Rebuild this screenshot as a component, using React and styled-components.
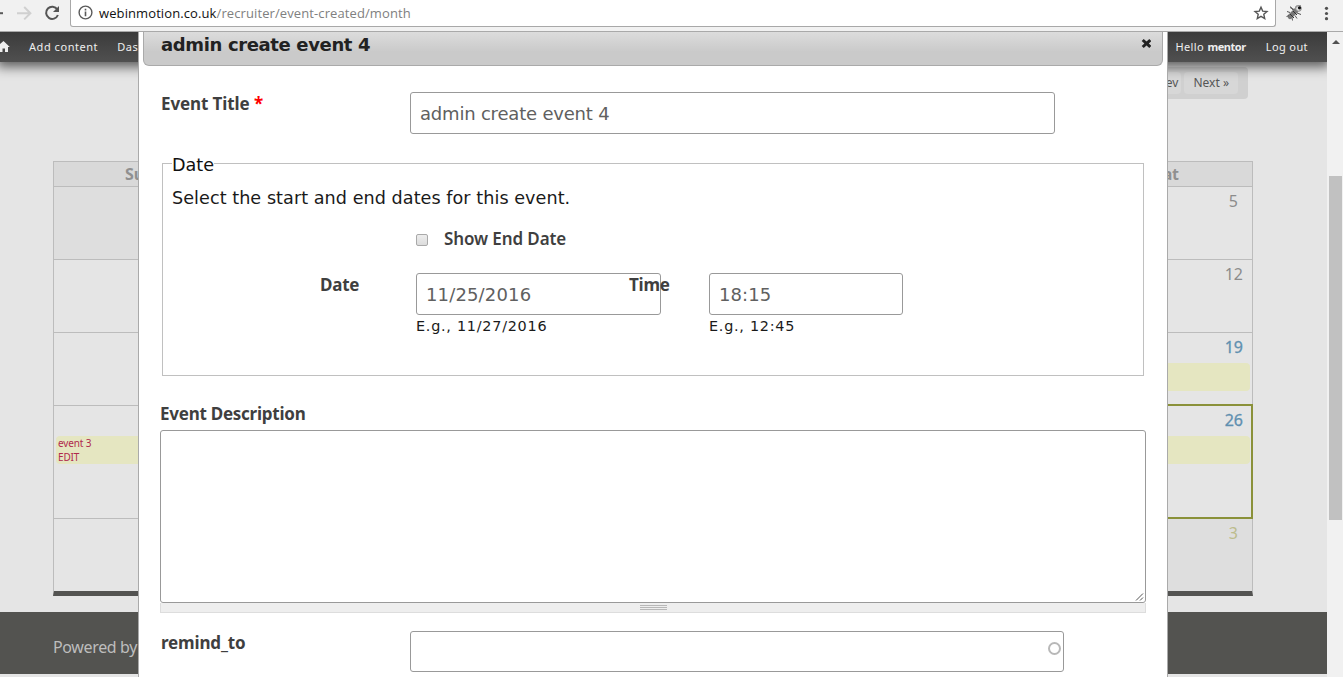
import React from 'react';
import styled, { createGlobalStyle, css } from 'styled-components';

const ui = '"Noto Sans", "Open Sans", sans-serif';
const body = '"DejaVu Sans", sans-serif';

const GlobalStyle = createGlobalStyle`
  * { box-sizing: border-box; }
  html, body { margin: 0; padding: 0; overflow: hidden; }
  body { font-family: ${body}; color: #1a1a1a; background: #fff; }
`;

const Browser = styled.div`
  width: 1343px;
  height: 677px;
  display: flex;
  flex-direction: column;
  overflow: hidden;
`;

const Toolbar = styled.header`
  height: 32px;
  flex: none;
  display: flex;
  align-items: flex-start;
  background: #f1f1f1;
  border-bottom: 1px solid #a9a9a9;
`;

const NavIcons = styled.div`
  width: 70px;
  height: 27px;
  flex: none;
  svg { display: block; }
`;

const AddressBar = styled.div`
  width: 1206px;
  height: 27px;
  padding: 0 6px 1px 7px;
  display: flex;
  align-items: center;
  background: #fff;
  border: 1px solid #a8a8a8;
  border-top: 0;
  border-radius: 0 0 3px 3px;
`;

const Url = styled.span`
  flex: 1;
  margin-left: 6px;
  font: 13px/18px "Open Sans", sans-serif;
  letter-spacing: 0.1px;
  color: #808080;
  b { font-weight: 400; color: #111; }
`;

const Extensions = styled.div`
  flex: 1;
  height: 27px;
  svg { display: block; }
`;

const Viewport = styled.div`
  flex: 1;
  min-height: 0;
  display: flex;
`;

const Page = styled.div`
  position: relative;
  width: 1327px;
  height: 645px;
  overflow: hidden;
  background: #e5e5e5;
  display: flex;
  flex-direction: column;
`;

const AdminBar = styled.nav`
  position: relative;
  height: 30px;
  flex: none;
  display: flex;
  align-items: center;
  padding: 0 19px 0 0;
  background: linear-gradient(#3b3b3b, #505050);
  box-shadow: 0 2px 12px 3px rgba(0, 0, 0, 0.6);
  font: 11px/16px ${ui};
  color: #eee;
  svg { display: block; margin-right: 19px; }
`;

const AdminLink = styled.span`
  margin-right: ${(p) => p.$gap || 0}px;
  letter-spacing: ${(p) => p.$spacing || 0.55}px;
`;

const Greeting = styled.span`
  margin-left: auto;
  margin-right: 20px;
  letter-spacing: 0.4px;
  white-space: pre;
  b { letter-spacing: -0.45px; }
`;

const PagerRow = styled.div`
  height: 99px;
  flex: none;
  padding: 5px 79px 0 0;
  display: flex;
  align-items: flex-start;
  justify-content: flex-end;
`;

const Pager = styled.div`
  height: 32px;
  padding: 5px 10px 0 6px;
  display: flex;
  gap: 3px;
  border-radius: 4px;
  background: #d0d0d0;
`;

const PagerLink = styled.span`
  height: 22px;
  padding: 0 9px;
  border-radius: 4px;
  background: #d7d7d7;
  font: 12px/22px ${ui};
  color: #555;
  &:first-child { padding-right: 3px; }
`;

const Calendar = styled.section`
  width: 1200px;
  flex: none;
  margin-left: 53px;
  border: 1px solid #bcbcbc;
  border-bottom: 5px solid #535351;
`;

const Week = styled.div`
  display: grid;
  grid-template-columns: repeat(7, 1fr);
  height: ${(p) => p.$height}px;
  border-top: 1px solid #bcbcbc;
`;

const Weekdays = styled(Week)`
  border-top: 0;
  background: #d9d9d9;
`;

const Weekday = styled.div`
  font: 700 16px/25px ${ui};
  color: #909090;
  text-align: center;
  letter-spacing: -0.2px;
`;

const tones = { past: '#8c8c8c', link: '#5f90b0', next: '#bcbc8c' };

const Day = styled.div`
  padding: 5px 2px 0;
  background: ${(p) => (p.$shade ? '#dedede' : 'transparent')};
  ${(p) =>
    p.$today &&
    css`
      margin: -2px -1px -1px 0;
      padding: 5px 1px 0;
      border: 2px solid #8a9139;
      z-index: 1;
    `}
`;

const DayNumber = styled.div`
  height: 25px;
  padding-right: ${(p) => p.$right || 7}px;
  font: 16px/19px ${ui};
  text-align: right;
  color: ${(p) => tones[p.$tone]};
  -webkit-text-stroke: ${(p) => (p.$tone === 'link' ? '0.3px' : '0')};
`;

const Event = styled.div`
  height: 28px;
  padding: 0 2px;
  border-radius: 4px;
  background: #e5e6c1;
  font: 10px/14px ${ui};
  letter-spacing: -0.15px;
  color: #b0294c;
`;

const Footer = styled.footer`
  height: 62px;
  flex: none;
  margin-top: 16px;
  padding: 25px 0 0 53px;
  background: #535350;
  font: 16px/20px ${ui};
  letter-spacing: -0.36px;
  color: #bdbdbd;
`;

const Dialog = styled.section`
  position: absolute;
  top: 0;
  left: 138px;
  width: 1030px;
  height: 645px;
  z-index: 5;
  overflow: hidden;
  background: #fff;
  border: solid #aaa;
  border-width: 0 1px;
`;

const TitleBar = styled.div`
  height: 34px;
  margin: 0 4px;
  padding: 3px 11px 0 17px;
  display: flex;
  justify-content: space-between;
  align-items: flex-start;
  border: 1px solid #aaa;
  border-top: 0;
  border-radius: 0 0 6px 6px;
  background: linear-gradient(#dcdcdc, #cacaca 60%);
`;

const Title = styled.h1`
  margin: 0;
  font: 700 18px/20px ${body};
  letter-spacing: -0.36px;
  color: #222;
`;

const Form = styled.form`
  padding: 26px 21px 0;
`;

const FormRow = styled.div`
  display: flex;
  align-items: flex-start;
  padding-left: 1px;
`;

const Label = styled.label`
  display: block;
  width: ${(p) => (p.$width ? p.$width + 'px' : 'auto')};
  font: 700 17px/24px ${ui};
  letter-spacing: ${(p) => p.$spacing || -0.25}px;
  color: #3f3f3f;
  em { color: #f00; font-style: normal; }
`;

const TextInput = styled.input`
  display: block;
  width: ${(p) => p.$width}px;
  height: 42px;
  margin: 0;
  padding: 0 9px;
  border: 1px solid #999;
  border-radius: 3px;
  outline: 0;
  background: #fff;
  font: 18px ${body};
  letter-spacing: ${(p) => p.$spacing || 0}px;
  color: #606060;
`;

const Fieldset = styled.fieldset`
  height: 224px;
  margin: 18px 2px 0;
  padding: 0 9px;
  border: 1px solid #c0c0c0;
`;

const Legend = styled.legend`
  padding: 4px 0 0;
  font: 17.6px/18px ${body};
  color: #111;
`;

const Hint = styled.p`
  margin: 13px 0 0;
  font: 17.6px/22px ${body};
  letter-spacing: 0.05px;
`;

const CheckRow = styled.div`
  display: flex;
  align-items: center;
  margin: 18px 0 0 244px;
  height: 24px;
  gap: 16px;
`;

const Checkbox = styled.span`
  width: 12px;
  height: 12px;
  margin-top: 2px;
  border: 1px solid #a9a9a9;
  border-radius: 2px;
  background: linear-gradient(#ededed, #dcdcdc);
`;

const CheckLabel = styled(Label)`
  font-weight: 600;
  letter-spacing: -0.1px;
`;

const DateRow = styled.div`
  display: flex;
  align-items: flex-start;
  margin: 22px 0 0 148px;
`;

const TimeLabel = styled(Label)`
  position: relative;
  z-index: 1;
  width: 80px;
  margin-left: -32px;
`;

const Example = styled.div`
  font: 14.4px/22px ${body};
  letter-spacing: 0.74px;
`;

const DescriptionLabel = styled(Label)`
  margin-top: 26px;
`;

const TextArea = styled.div`
  height: 173px;
  margin-top: 4px;
  display: flex;
  align-items: flex-end;
  justify-content: flex-end;
  border: 1px solid #999;
  border-radius: 3px;
`;

const Grippie = styled.div`
  height: 10px;
  display: flex;
  align-items: center;
  justify-content: center;
  border: 1px solid #ddd;
  border-top: 0;
  background: #eee;
  svg { display: block; }
`;

const ReminderRow = styled(FormRow)`
  margin-top: 18px;
`;

const Autocomplete = styled.div`
  display: flex;
  align-items: center;
  justify-content: flex-end;
  width: 654px;
  height: 41px;
  padding: 0 2px 6px 0;
  border: 1px solid #999;
  border-radius: 3px;
`;

const Throbber = styled.span`
  width: 13px;
  height: 13px;
  border: 2px solid #b8b8b8;
  border-radius: 50%;
`;

const Scrollbar = styled.aside`
  width: 16px;
  padding: 8px 1px 0 2px;
  display: flex;
  flex-direction: column;
  background: #f1f1f1;
  svg { display: block; margin-left: 3px; }
`;

const Thumb = styled.div`
  height: 344px;
  margin-top: 132px;
  background: #c1c1c1;
`;

const weeks = [
  { height: 73, days: [{ shade: true }, {}, {}, {}, {}, {}, { n: 5, tone: 'past', right: 12 }] },
  { height: 73, days: [{}, {}, {}, {}, {}, {}, { n: 12, tone: 'past' }] },
  { height: 73, days: [{}, {}, {}, {}, {}, {}, { n: 19, tone: 'link', event: [] }] },
  { height: 113, days: [{ event: ['event 3', 'EDIT'] }, {}, {}, {}, {}, {}, { n: 26, tone: 'link', event: [], today: true }] },
  { height: 73, days: [{}, {}, {}, {}, {}, {}, { n: 3, tone: 'next', right: 12, shade: true }] },
];

function BrowserToolbar() {
  return (
    <Toolbar>
      <NavIcons>
        <svg width="70" height="27" fill="none" strokeWidth="2">
          <path d="M0 13.2h3" stroke="#5a5a5a" />
          <path d="M17 13.2h13M24.2 7l6.2 6.2-6.2 6.2" stroke="#d0d0d0" />
          <path d="M57.3 9.4a6.1 6.1 0 1 0 .6 5.6" stroke="#555" />
          <path d="M59 6v6h-6z" fill="#555" />
        </svg>
      </NavIcons>
      <AddressBar>
        <svg width="15" height="15" fill="none" stroke="#5a5a5a">
          <circle cx="7.5" cy="7.5" r="6.4" strokeWidth="1.4" />
          <path d="M7.5 6.6v4.6M7.5 3.7v1.7" strokeWidth="1.6" />
        </svg>
        <Url><b>webinmotion.co.uk</b>/recruiter/event-created/month</Url>
        <svg width="16" height="16" fill="none" stroke="#555" strokeWidth="1.4">
          <path d="M8 2.2l1.7 3.9 4.3.4-3.2 2.8.9 4.2L8 11.3l-3.7 2.2.9-4.2L2 6.5l4.3-.4z" />
        </svg>
      </AddressBar>
      <Extensions>
        <svg width="67" height="27" fill="none" stroke="#555">
          <path d="M14 16.500l6-6" stroke="#777" strokeWidth="5" strokeLinecap="round" />
          <path d="M14 14l4 4M17 11l4 4" stroke="#333" />
          <path d="M14 12.500l-3-1M17 10l-2.500-3.500M18 9.500l-4-2M19 15.500l2 3M21 13l4 1.500M16 17.500l.5 3M13 15.500l-2.500 1" />
          <path d="M19 9l1-3 5-.5" stroke="#999" />
          <circle cx="22.500" cy="8.500" r="2.800" fill="#ddd" stroke="#888" />
          <circle cx="23.500" cy="7.800" r="1.600" fill="#111" stroke="none" />
          <g fill="#505050" stroke="none">
            <circle cx="50.500" cy="8.300" r="1.600" />
            <circle cx="50.500" cy="13.500" r="1.600" />
            <circle cx="50.500" cy="18.700" r="1.600" />
          </g>
        </svg>
      </Extensions>
    </Toolbar>
  );
}

function EventDialog() {
  return (
    <Dialog>
      <TitleBar>
        <Title>admin create event 4</Title>
        <svg width="10" height="16" viewBox="0 0 10 16">
          <path d="M1.700 5l7.600 7M9.300 5l-7.600 7" stroke="#222" strokeWidth="3" />
        </svg>
      </TitleBar>
      <Form>
        <FormRow>
          <Label $width={249} $spacing={-0.1}>Event Title <em>*</em></Label>
          <TextInput $width={645} $spacing={-0.2} readOnly value="admin create event 4" />
        </FormRow>
        <Fieldset>
          <Legend>Date</Legend>
          <Hint>Select the start and end dates for this event.</Hint>
          <CheckRow>
            <Checkbox />
            <CheckLabel>Show End Date</CheckLabel>
          </CheckRow>
          <DateRow>
            <Label $width={96}>Date</Label>
            <div>
              <TextInput $width={245} $spacing={0.15} readOnly value="11/25/2016" />
              <Example>E.g., 11/27/2016</Example>
            </div>
            <TimeLabel>Time</TimeLabel>
            <div>
              <TextInput $width={194} $spacing={0.1} readOnly value="18:15" />
              <Example>E.g., 12:45</Example>
            </div>
          </DateRow>
        </Fieldset>
        <DescriptionLabel>Event Description</DescriptionLabel>
        <TextArea>
          <svg width="10" height="10" stroke="#555" strokeWidth="1">
            <path d="M1 8.500l7-7M5 8.500l3-3" />
          </svg>
        </TextArea>
        <Grippie>
          <svg width="27" height="5" stroke="#b8b8b8">
            <path d="M0 .5h27M0 2.500h27M0 4.500h27" />
          </svg>
        </Grippie>
        <ReminderRow>
          <Label $width={249} $spacing={-0.15}>remind_to</Label>
          <Autocomplete><Throbber /></Autocomplete>
        </ReminderRow>
      </Form>
    </Dialog>
  );
}

export default function App() {
  return (
    <Browser>
      <GlobalStyle />
      <BrowserToolbar />
      <Viewport>
        <Page>
          <AdminBar>
            <svg width="10" height="12" fill="#eee">
              <path d="M3.500 0l6.300 6H8v5H5V7.500H2.500V11H0V3z" />
            </svg>
            <AdminLink $gap={19}>Add content</AdminLink>
            <AdminLink>Das</AdminLink>
            <Greeting>Hello <b>mentor</b></Greeting>
            <AdminLink $spacing={0.4}>Log out</AdminLink>
          </AdminBar>
          <PagerRow>
            <Pager>
              <PagerLink>ev</PagerLink>
              <PagerLink>Next »</PagerLink>
            </Pager>
          </PagerRow>
          <Calendar>
            <Weekdays $height={24}>
              {['Sun', '', '', '', '', '', 'Sat'].map((d, i) => <Weekday key={i}>{d}</Weekday>)}
            </Weekdays>
            {weeks.map((week, i) => (
              <Week key={i} $height={week.height}>
                {week.days.map((day, j) => (
                  <Day key={j} $shade={day.shade} $today={day.today}>
                    <DayNumber $tone={day.tone} $right={day.right}>{day.n}</DayNumber>
                    {day.event && <Event>{day.event.map((t) => <div key={t}>{t}</div>)}</Event>}
                  </Day>
                ))}
              </Week>
            ))}
          </Calendar>
          <Footer>Powered by</Footer>
          <EventDialog />
        </Page>
        <Scrollbar>
          <svg width="8" height="4" fill="#505050"><path d="M0 4l4-4 4 4z" /></svg>
          <Thumb />
        </Scrollbar>
      </Viewport>
    </Browser>
  );
}
